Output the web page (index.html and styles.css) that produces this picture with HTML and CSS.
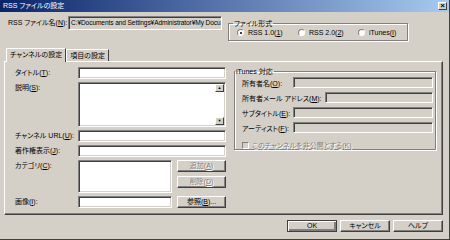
FILE: index.html
```html
<!DOCTYPE html>
<html lang="ja">
<head>
    <meta charset="UTF-8">
    <title>RSS ファイルの設定</title>
    <link rel="stylesheet" href="styles.css">
</head>
<body>

<div class="window">
    <!-- タイトルバー -->
    <div class="caption">
        <span class="caption-text">RSS ファイルの設定</span>
        <span class="close-btn">×</span>
    </div>

    <div class="top-row">
        <span class="file-label">RSS ファイル名(<u>N</u>):</span>
        <div class="edit path">C:¥Documents and Settings¥Administrator¥My Docu</div>

        <fieldset class="group format">
            <legend>ファイル形式</legend>
            <div class="radios">
                <span class="opt"><span class="radio checked"></span><span>RSS 1.0(<u>1</u>)</span></span>
                <span class="opt"><span class="radio"></span><span>RSS 2.0(<u>2</u>)</span></span>
                <span class="opt"><span class="radio"></span><span>iTunes(<u>I</u>)</span></span>
            </div>
        </fieldset>
    </div>

    <!-- タブ -->
    <div class="tabs">
        <span class="tab active">チャンネルの設定</span>
        <span class="tab">項目の設定</span>
    </div>

    <div class="panel">
        <div class="channel-form">
            <span class="lbl">タイトル(<u>T</u>):</span>
            <div class="edit wide"></div>

            <span class="lbl">説明(<u>S</u>):</span>
            <div class="edit wide memo">
                <div class="scroll">
                    <span class="arrow">▲</span>
                    <span class="arrow">▼</span>
                </div>
            </div>

            <span class="lbl">チャンネル URL(<u>U</u>):</span>
            <div class="edit wide"></div>

            <span class="lbl">著作権表示(<u>J</u>):</span>
            <div class="edit wide"></div>

            <span class="lbl">カテゴリ(<u>C</u>):</span>
            <div class="edit list"></div>
            <div class="btn-col">
                <span class="btn disabled"><span>追加(<u>A</u>)</span></span>
                <span class="btn disabled"><span>削除(<u>D</u>)</span></span>
            </div>

            <span class="lbl">画像(<u>I</u>):</span>
            <div class="edit"></div>
            <span class="btn"><span>参照(<u>B</u>)...</span></span>
        </div>

        <fieldset class="group itunes">
            <legend>iTunes 対応</legend>
            <div class="itunes-rows">
                <div class="irow"><span class="ilbl">所有者名(<u>O</u>):</span><div class="edit off"></div></div>
                <div class="irow"><span class="ilbl">所有者メール アドレス(<u>M</u>):</span><div class="edit off"></div></div>
                <div class="irow"><span class="ilbl">サブタイトル(<u>E</u>):</span><div class="edit off"></div></div>
                <div class="irow"><span class="ilbl">アーティスト(<u>F</u>):</span><div class="edit off"></div></div>
                <div class="check-row"><span class="checkbox"></span><span class="dim">このチャンネルを非公開とする(<u>K</u>)</span></div>
            </div>
        </fieldset>
    </div>

    <div class="footer">
        <span class="btn big default">OK</span>
        <span class="btn big">キャンセル</span>
        <span class="btn big">ヘルプ</span>
    </div>
</div>

</body>
</html>
```

FILE: styles.css
```css
body {
    margin: 0;
    padding: 0;
    background-color: #d4d0c8;
    font-family: "Liberation Sans", "Noto Sans CJK JP", sans-serif;
    font-size: 7px;
    font-feature-settings: "palt";
    color: #000;
}

u {
    text-decoration: underline;
}

.window {
    width: 450px;
    height: 240px;
    box-sizing: border-box;
    background-color: #d4d0c8;
    border-right: 1px solid #404040;
    border-bottom: 1px solid #404040;
    display: flex;
    flex-direction: column;
}

/* タイトルバー */
.caption {
    flex: 0 0 12px;
    height: 12px;
    box-sizing: border-box;
    background-color: #0a246a;
    background-image: linear-gradient(to right, #0a246a, #a6caf0);
    display: flex;
    align-items: center;
    justify-content: space-between;
    padding: 0 2px 0 3px;
}

.caption-text {
    color: #fff;
    line-height: 12px;
}

.close-btn {
    width: 9px;
    height: 8px;
    box-sizing: border-box;
    background-color: #d4d0c8;
    border: 1px solid;
    border-color: #fff #404040 #404040 #fff;
    color: #000;
    font-size: 8px;
    line-height: 6px;
    text-align: center;
    font-weight: bold;
}

/* 3D の枠 */
.edit {
    box-sizing: border-box;
    height: 12px;
    background-color: #fff;
    border: 1px solid;
    border-color: #808080 #fff #fff #808080;
    box-shadow: inset 1px 1px #404040, inset -1px -1px #d4d0c8;
}

.btn {
    box-sizing: border-box;
    height: 12px;
    background-color: #d4d0c8;
    border: 1px solid;
    border-color: #fff #404040 #404040 #fff;
    box-shadow: inset -1px -1px #808080;
    display: flex;
    align-items: center;
    justify-content: center;
    line-height: 10px;
    white-space: nowrap;
}

.btn.disabled,
.dim {
    color: #808080;
    text-shadow: 1px 1px #fff;
}

.group {
    margin: 0;
    padding: 0;
    border: 1px solid #808080;
    box-shadow: inset 1px 1px #fff, 1px 1px #fff;
    min-width: 0;
}

.group legend {
    padding: 0 1px;
    margin-left: 4px;
    line-height: 9px;
}

/* 上段 */
.top-row {
    flex-shrink: 0;
    display: flex;
    align-items: flex-start;
    padding: 4px 0 0 8px;
    height: 36px;
    box-sizing: border-box;
}

.file-label {
    width: 60px;
    line-height: 14px;
    white-space: nowrap;
}

.path {
    width: 154px;
    height: 14px;
    background-color: #d4d0c8;
    line-height: 12px;
    padding-left: 2px;
    white-space: nowrap;
    overflow: hidden;
    font-size: 6.6px;
    letter-spacing: -0.1px;
}

.format {
    margin: 3px 0 0 6px;
    width: 180px;
    height: 22px;
    box-sizing: border-box;
}

.radios {
    display: grid;
    grid-template-columns: 61px 60px auto;
    padding: 0 0 0 8px;
    line-height: 9px;
}

.opt {
    display: flex;
    align-items: center;
    gap: 4px;
    white-space: nowrap;
}

.radio {
    width: 7px;
    height: 7px;
    box-sizing: border-box;
    border-radius: 50%;
    border: 1px solid;
    border-color: #808080 #fff #fff #808080;
    background-color: #fff;
    display: flex;
    align-items: center;
    justify-content: center;
}

.radio.checked::after {
    content: "";
    width: 2px;
    height: 2px;
    border-radius: 50%;
    background-color: #000;
}

/* タブ */
.tabs {
    flex-shrink: 0;
    display: flex;
    align-items: flex-end;
    height: 13px;
    margin: 0 0 0 6px;
}

.tab {
    height: 12px;
    box-sizing: border-box;
    padding: 0 3px;
    border: 1px solid;
    border-color: #fff #404040 transparent #fff;
    border-bottom: none;
    line-height: 11px;
    white-space: nowrap;
    position: relative;
}

.tab.active {
    height: 14px;
    margin-bottom: -1px;
    background-color: #d4d0c8;
    z-index: 1;
}

.panel {
    flex-shrink: 0;
    margin: 0 6px 0 4px;
    height: 154px;
    box-sizing: border-box;
    border: 1px solid;
    border-color: #fff #404040 #404040 #fff;
    box-shadow: inset -1px -1px #808080;
    display: flex;
    align-items: flex-start;
    gap: 8px;
    padding: 5px 0 0 10px;
}

.channel-form {
    display: grid;
    grid-template-columns: 58px 94px 49px;
    grid-template-rows: 12px 45px 12px 12px 33px 12px;
    column-gap: 5px;
    row-gap: 3px;
}

.lbl {
    line-height: 12px;
    white-space: nowrap;
}

.wide {
    grid-column: 2 / 4;
}

.memo {
    height: 45px;
    display: flex;
    justify-content: flex-end;
    padding: 1px;
}

.scroll {
    width: 9px;
    display: flex;
    flex-direction: column;
    justify-content: space-between;
}

.arrow {
    height: 8px;
    box-sizing: border-box;
    background-color: #d4d0c8;
    border: 1px solid;
    border-color: #fff #404040 #404040 #fff;
    font-size: 4px;
    line-height: 6px;
    text-align: center;
    color: #000;
}

.list {
    height: 33px;
}

.btn-col {
    display: flex;
    flex-direction: column;
    gap: 4px;
}

/* iTunes */
.itunes {
    width: 202px;
    height: 83px;
    box-sizing: border-box;
}

.itunes legend {
    margin-left: 0;
}

.itunes-rows {
    display: flex;
    flex-direction: column;
    gap: 4px;
    padding: 1px 2px 0 7px;
}

.irow {
    display: flex;
    align-items: center;
    justify-content: space-between;
    height: 11px;
    white-space: nowrap;
}

.irow .edit {
    height: 11px;
    width: 140px;
    background-color: #d4d0c8;
}

.irow:nth-child(2) .edit {
    width: 108px;
}

.check-row {
    display: flex;
    align-items: center;
    gap: 3px;
    margin-top: 3px;
    white-space: nowrap;
}

.checkbox {
    width: 7px;
    height: 7px;
    box-sizing: border-box;
    border: 1px solid;
    border-color: #808080 #fff #fff #808080;
    background-color: #d4d0c8;
}

.footer {
    flex-shrink: 0;
    display: flex;
    justify-content: flex-end;
    gap: 3px;
    padding: 5px 6px 0 0;
}

.btn.big {
    width: 50px;
}

.btn.default {
    border-color: #404040;
    box-shadow: inset 1px 1px #fff, inset -2px -2px #808080;
}
```
